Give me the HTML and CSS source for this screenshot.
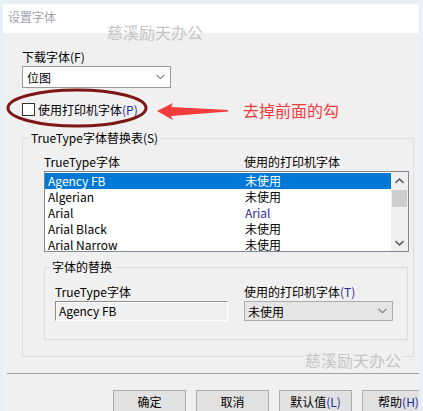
FILE: index.html
```html
<!DOCTYPE html>
<html lang="zh-CN">
<head>
<meta charset="utf-8">
<title>设置字体</title>
<link rel="stylesheet" href="styles.css">
</head>
<body>
<div class="window">
  <div class="titlebar">设置字体</div>
  <div class="main">
    <div class="label">下载字体(F)</div>
    <div class="select">
      <span>位图</span>
      <svg class="chev" width="9" height="6" viewBox="0 0 9 6"><polyline points="0.5,0.8 4.5,4.8 8.5,0.8" fill="none" stroke="#404040" stroke-width="1"/></svg>
    </div>
    <div class="check-row">
      <span class="checkbox"></span>
      <span>使用打印机字体<span class="mn">(P)</span></span>
    </div>
    <fieldset class="group outer">
      <legend>TrueType字体替换表(S)</legend>
      <div class="outer-body">
        <div class="headers">
          <span>TrueType字体</span>
          <span>使用的打印机字体</span>
        </div>
        <div class="listbox">
          <div class="rows">
            <div class="row selected"><span>Agency FB</span><span>未使用</span></div>
            <div class="row"><span>Algerian</span><span>未使用</span></div>
            <div class="row"><span>Arial</span><span class="blue">Arial</span></div>
            <div class="row"><span>Arial Black</span><span>未使用</span></div>
            <div class="row"><span>Arial Narrow</span><span>未使用</span></div>
          </div>
          <div class="scrollbar">
            <div class="sb-btn">
              <svg width="9" height="6" viewBox="0 0 9 6"><polyline points="0.5,5 4.5,1 8.5,5" fill="none" stroke="#606060" stroke-width="1.6"/></svg>
            </div>
            <div class="thumb"></div>
            <div class="sb-space"></div>
            <div class="sb-btn">
              <svg width="9" height="6" viewBox="0 0 9 6"><polyline points="0.5,1 4.5,5 8.5,1" fill="none" stroke="#606060" stroke-width="1.6"/></svg>
            </div>
          </div>
        </div>
        <fieldset class="group inner">
          <legend>字体的替换</legend>
          <div class="inner-body">
            <div class="col">
              <div class="label">TrueType字体</div>
              <div class="textbox">Agency FB</div>
            </div>
            <div class="col">
              <div class="label">使用的打印机字体<span class="mn">(T)</span></div>
              <div class="combo">
                <span>未使用</span>
                <svg class="chev" width="9" height="6" viewBox="0 0 9 6"><polyline points="0.5,0.8 4.5,4.8 8.5,0.8" fill="none" stroke="#404040" stroke-width="1"/></svg>
              </div>
            </div>
          </div>
        </fieldset>
      </div>
    </fieldset>
  </div>
  <div class="separator"></div>
  <div class="buttons">
    <div class="btn">确定</div>
    <div class="btn">取消</div>
    <div class="btn">默认值<span class="mn">(L)</span></div>
    <div class="btn">帮助<span class="mn">(H)</span></div>
  </div>

  <div class="watermark wm-top">慈溪励天办公</div>
  <div class="watermark wm-bottom">慈溪励天办公</div>
  <svg class="annot" width="416" height="407" viewBox="0 0 416 407">
    <ellipse cx="74" cy="104" rx="69" ry="18" fill="none" stroke="#7d1717" stroke-width="3"/>
    <polygon points="154,107 170,99 168,103 225,106 225,107.5 168,112 170,116" fill="#f23b3b"/>
  </svg>
  <div class="note">去掉前面的勾</div>
</div>
</body>
</html>
```

FILE: styles.css
```css
* { box-sizing: border-box; }

body {
  margin: 0;
  padding: 4px 0 0 3px;
  background: #e9eff7;
  font-family: "Noto Sans CJK SC", "Noto Sans", sans-serif;
  font-size: 12px;
  color: #000;
  overflow: hidden;
}

.window {
  position: relative;
  width: 416px;
  height: 407px;
  background: #f0f0f0;
  overflow: hidden;
}

.titlebar {
  height: 29px;
  background: #fff;
  padding-left: 5px;
  line-height: 26px;
  color: #9ea3aa;
}

.main {
  padding: 16px 0 0 19px;
}

.label {
  line-height: 16px;
  white-space: nowrap;
}

.mn { color: #2a2a96; }
.blue { color: #2a2a96; }

.select {
  margin-top: 1px;
  width: 149px;
  height: 22px;
  background: #fff;
  border: 1px solid #9a9a9a;
  display: flex;
  align-items: center;
  justify-content: space-between;
  padding: 0 4px 0 4px;
}
.select .chev { margin-right: 1px; }

.check-row {
  margin-top: 13px;
  height: 16px;
  display: flex;
  align-items: center;
  gap: 3px;
}
.checkbox {
  width: 13px;
  height: 13px;
  border: 1px solid #333;
  background: #fff;
}

.group {
  margin: 0;
  padding: 0;
  border: 1px solid #dcdcdc;
  min-width: 0;
}
.group legend {
  padding: 0 2px;
  line-height: 16px;
  white-space: nowrap;
}

.outer {
  margin-top: 13px;
  width: 392px;
}
.outer legend { margin-left: 6px; }
.outer-body {
  padding: 8px 0 16px 21px;
}

.headers {
  display: grid;
  grid-template-columns: 200px 1fr;
  line-height: 16px;
}

.listbox {
  margin-top: 1px;
  width: 365px;
  height: 81px;
  border: 1px solid #828790;
  background: #fff;
  display: flex;
}
.rows {
  flex: 1;
  padding-top: 1px;
  overflow: hidden;
}
.row {
  display: grid;
  grid-template-columns: 197px 1fr;
  padding-left: 3px;
  height: 16px;
  line-height: 16px;
  white-space: nowrap;
}
.row.selected {
  background: #0078d7;
  color: #fff;
}
.scrollbar {
  width: 17px;
  background: #f0f0f0;
  display: flex;
  flex-direction: column;
}
.sb-btn {
  height: 17px;
  display: flex;
  align-items: center;
  justify-content: center;
}
.thumb {
  height: 17px;
  background: #cdcdcd;
  margin: 1px 1px 0 1px;
}
.sb-space { flex: 1; }

.inner {
  margin-top: 7px;
  width: 364px;
}
.inner legend { margin-left: 5px; }
.inner-body {
  padding: 9px 0 18px 10px;
  display: flex;
  gap: 16px;
}
.col .label { margin-bottom: 1px; }

.textbox {
  width: 173px;
  height: 20px;
  border: 1px solid #8c8c8c;
  border-right-color: #fff;
  border-bottom-color: #fff;
  box-shadow: inset 1px 1px 0 #fff;
  background: #f0f0f0;
  line-height: 18px;
  padding-left: 3px;
}

.combo {
  width: 149px;
  height: 20px;
  border: 1px solid #adadad;
  background: #e5e5e5;
  display: flex;
  align-items: center;
  justify-content: space-between;
  padding: 0 5px 0 3px;
}

.separator {
  margin: 16px 0 0 4px;
  height: 1px;
  background: #a0a0a0;
}

.buttons {
  margin-top: 16px;
  padding-left: 110px;
  display: flex;
  gap: 10px;
}
.btn {
  flex: none;
  width: 73px;
  height: 24px;
  border: 1px solid #adadad;
  background: #e1e1e1;
  text-align: center;
  line-height: 22px;
  white-space: nowrap;
}

.watermark {
  position: absolute;
  font-size: 16px;
  line-height: 18px;
  color: #c4c4c4;
  white-space: nowrap;
  letter-spacing: 0;
}
.wm-top {
  left: 104px;
  top: 19px;
}
.wm-bottom {
  left: 301px;
  top: 347px;
  background: #f0f0f0;
  padding: 0 1px;
}

.annot {
  position: absolute;
  left: 0;
  top: 0;
  pointer-events: none;
}

.note {
  position: absolute;
  left: 240px;
  top: 97px;
  font-size: 16px;
  line-height: 18px;
  color: #f03c3c;
  white-space: nowrap;
}
```
